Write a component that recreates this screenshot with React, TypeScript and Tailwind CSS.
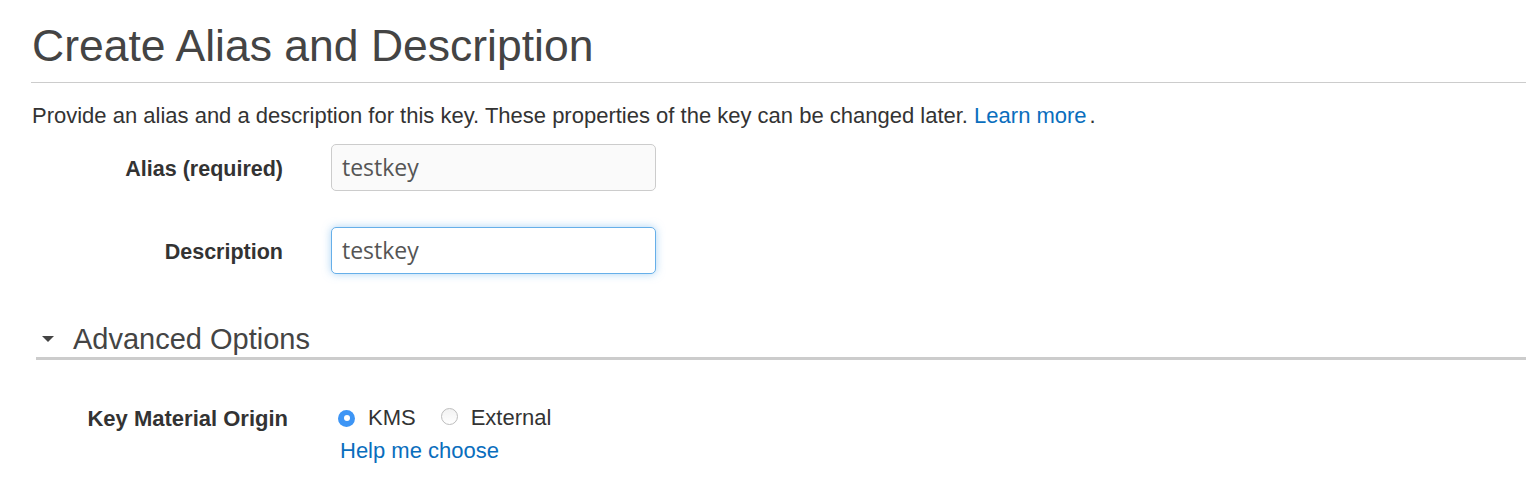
import React from 'react'

const Radio = ({ checked }: { checked: boolean }) =>
  checked ? (
    <span className="inline-flex h-[17px] w-[17px] items-center justify-center rounded-full bg-[#3d95f5]">
      <span className="h-[6px] w-[6px] rounded-full bg-white" />
    </span>
  ) : (
    <span className="inline-block h-[17px] w-[17px] rounded-full border border-[#bdbdbd] bg-gradient-to-b from-[#f2f2f2] to-white" />
  )

const App = () => {
  return (
    <div className="min-h-[500px] bg-white pl-8 font-['Liberation_Sans',Arial,sans-serif] text-[#333]">
      <h1 className="border-b border-[#cccccc] pt-[20px] pb-[10px] text-[44.5px] leading-[52px] text-[#444] -ml-px pl-px">
        Create Alias and Description
      </h1>

      <p className="mt-[20px] text-[22px] leading-[26px] text-[#333]">
        Provide an alias and a description for this key. These properties of the key can be changed later.{' '}
        <span className="text-[#0a6ebd]">Learn more</span>
        <span className="ml-[3px]">.</span>
      </p>

      <div className="mt-[15px] grid grid-cols-[251px_325px] items-center gap-x-[48px] gap-y-[36px]">
        <label className="pt-[4px] text-right text-[21.5px] font-bold text-[#333]">Alias (required)</label>
        <div className="flex h-[47px] items-center rounded-[5px] border border-[#cccccc] bg-[#fafafa] px-[10px] font-['Open_Sans',sans-serif] text-[23px] text-[#555]">
          testkey
        </div>
        <label className="pt-[4px] text-right text-[21.5px] font-bold text-[#333]">Description</label>
        <div className="flex h-[47px] items-center rounded-[5px] border border-[#66afe9] bg-white px-[10px] font-['Open_Sans',sans-serif] text-[23px] text-[#555] shadow-[0_0_8px_rgba(102,175,233,0.55)]">
          testkey
        </div>
      </div>

      <div className="ml-1 mt-[48px]">
        <div className="flex items-center border-b-[3px] border-[#cccccc] pb-[1px]">
          <svg width="12" height="8" viewBox="0 0 12 8" className="ml-[6px] mr-[19px]">
            <path d="M0 1 L12 1 L6 7 Z" fill="#444" />
          </svg>
          <span className="text-[29px] leading-[34px] text-[#444]">Advanced Options</span>
        </div>

        <div className="mt-[46px] grid grid-cols-[252px_auto] gap-x-[50px]">
          <label className="pt-[1px] text-right text-[22px] font-bold leading-[24px] text-[#333]">
            Key Material Origin
          </label>
          <div className="flex flex-col">
            <div className="flex items-center text-[22px] leading-[24px] text-[#333]">
              <Radio checked />
              <span className="ml-[13px]">KMS</span>
              <span className="ml-[25px]">
                <Radio checked={false} />
              </span>
              <span className="ml-[13px]">External</span>
            </div>
            <span className="mt-[9px] ml-[2px] text-[22px] leading-[24px] text-[#0a6ebd]">Help me choose</span>
          </div>
        </div>
      </div>
    </div>
  )
}

export default App
